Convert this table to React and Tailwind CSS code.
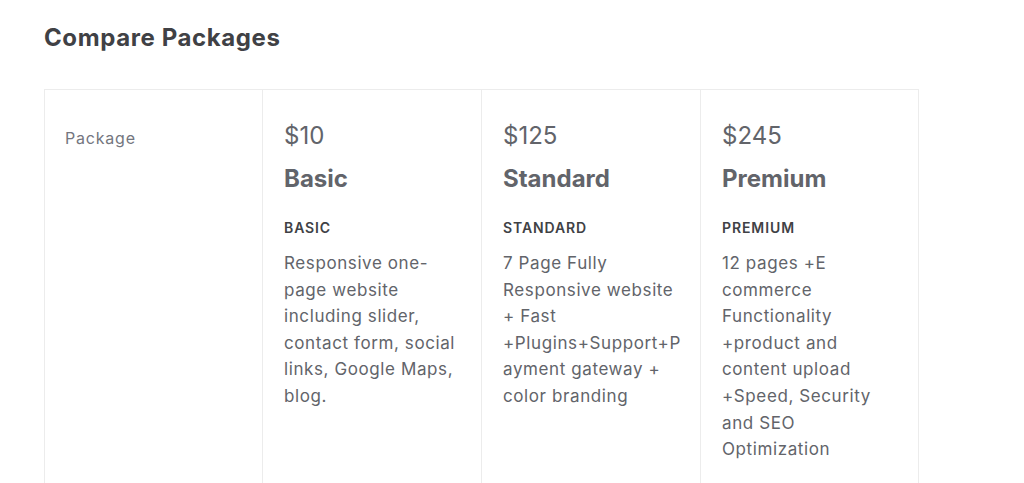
import React from 'react';

// Package tiers shown in the comparison table
const packages = [
  {
    price: '$10',
    title: 'Basic',
    tag: 'BASIC',
    description:
      'Responsive one-page website including slider, contact form, social links, Google Maps, blog.',
  },
  {
    price: '$125',
    title: 'Standard',
    tag: 'STANDARD',
    // word joiners keep the "+" run together so it wraps mid-word like the original
    description:
      '7 Page Fully Responsive website + Fast +Plugins+\u2060Support+\u2060Payment gateway + color branding',
  },
  {
    price: '$245',
    title: 'Premium',
    tag: 'PREMIUM',
    description:
      '12 pages +E commerce Functionality +product and content upload +Speed, Security and SEO Optimization',
  },
];

const PackageCell = ({ pkg, last }) => (
  <div className={`pl-[21px] pr-[18px] pt-[32px] pb-12 ${last ? '' : 'border-r border-[#ececec]'}`}>
    <p className="text-[24px] leading-[28px] text-[#62646a]">{pkg.price}</p>
    <h3 className="mt-[13px] text-[24px] leading-[32px] font-bold text-[#62646a]">{pkg.title}</h3>
    <p className="mt-[23px] text-[14px] leading-[20px] font-semibold tracking-[0.9px] text-[#404145]">
      {pkg.tag}
    </p>
    <p className="mt-[12px] text-[17px] leading-[26.6px] tracking-[0.6px] text-[#62646a] break-words">
      {pkg.description}
    </p>
  </div>
);

const App = () => {
  return (
    <div className="min-h-screen bg-white font-['Inter',sans-serif] pl-[44px] pt-[22px]">
      <h2 className="text-[24px] leading-[32px] font-bold tracking-[0.6px] text-[#404145]">
        Compare Packages
      </h2>
      <div className="mt-[35px] w-[875px] grid grid-cols-[218px_219px_219px_219px] border border-[#ececec]">
        <div className="px-[20px] pt-[36px] border-r border-[#ececec]">
          <p className="text-[16px] leading-[24px] tracking-[0.8px] text-[#74767e]">Package</p>
        </div>
        {packages.map((pkg, i) => (
          <PackageCell key={pkg.title} pkg={pkg} last={i === packages.length - 1} />
        ))}
      </div>
    </div>
  );
};

export default App;
